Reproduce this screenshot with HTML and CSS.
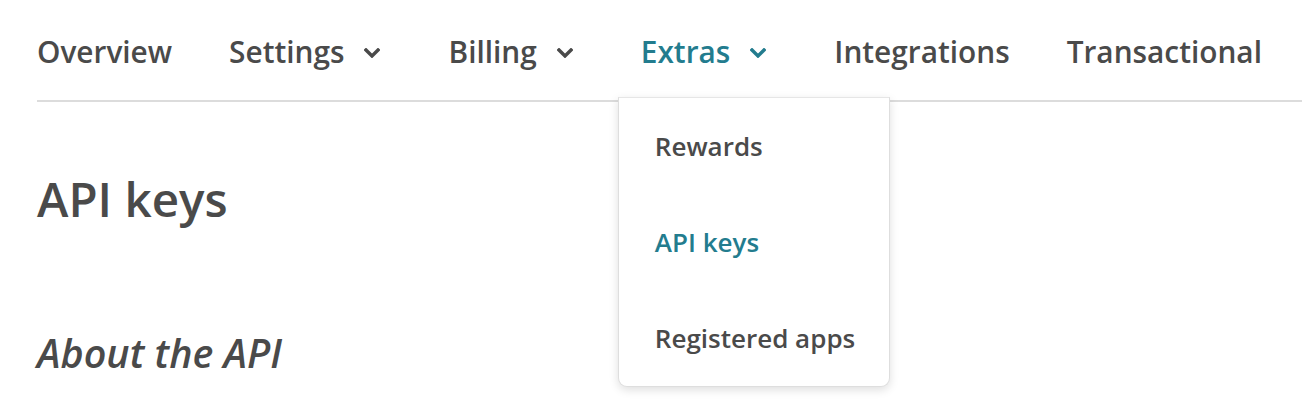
FILE: index.html
```html
<!DOCTYPE html>
<html>
<head>
<meta charset="utf-8">
<link rel="stylesheet" href="styles.css">
</head>
<body>
<nav class="nav">
  <div class="nav-item">Overview</div>
  <div class="nav-item">Settings<svg class="chev" viewBox="0 0 16 10"><polyline points="2,2 8,8 14,2"/></svg></div>
  <div class="nav-item">Billing<svg class="chev" viewBox="0 0 16 10"><polyline points="2,2 8,8 14,2"/></svg></div>
  <div class="nav-item active">Extras<svg class="chev" viewBox="0 0 16 10"><polyline points="2,2 8,8 14,2"/></svg>
    <div class="menu">
      <div class="menu-item">Rewards</div>
      <div class="menu-item current">API keys</div>
      <div class="menu-item">Registered apps</div>
    </div>
  </div>
  <div class="nav-item">Integrations</div>
  <div class="nav-item">Transactional</div>
</nav>
<main class="content">
  <h1 class="title">API keys</h1>
  <h2 class="subtitle">About the API</h2>
</main>
</body>
</html>
```

FILE: styles.css
```css
html, body {
  margin: 0;
  padding: 0;
  background: #fff;
}
body {
  font-family: "Open Sans", "DejaVu Sans", sans-serif;
  color: #4a4a4a;
  min-height: 418px;
}
.nav {
  display: flex;
  gap: 57px;
  margin-left: 37px;
  padding: 32px 0 28px;
  border-bottom: 2px solid #dcdcdc;
}
.nav-item {
  position: relative;
  font-size: 29.8px;
  font-weight: 600;
  line-height: 40px;
  white-space: nowrap;
  display: flex;
  align-items: center;
}
.nav-item.active {
  color: #237c8e;
}
.chev {
  width: 16px;
  height: 10px;
  margin-left: 20px;
  margin-right: 11px;
  margin-top: 2px;
  fill: none;
  stroke: currentColor;
  stroke-width: 3.4;
  stroke-linecap: square;
}
.menu {
  position: absolute;
  left: -23px;
  top: 65px;
  width: 270px;
  height: 288px;
  background: #fff;
  border: 1px solid #dedede;
  border-top-color: #e6e6e6;
  border-radius: 0 0 9px 9px;
  box-shadow: 0 3px 10px rgba(0, 0, 0, 0.13);
  color: #4a4a4a;
  z-index: 2;
}
.menu-item {
  font-size: 26px;
  font-weight: 600;
  line-height: 96px;
  height: 96px;
  padding-left: 36px;
}
.menu-item.current {
  color: #237c8e;
}
.content {
  padding-left: 37px;
}
.title {
  margin: 67px 0 0;
  font-size: 47.5px;
  font-weight: 600;
  line-height: 60px;
}
.subtitle {
  margin: 99px 0 0;
  font-size: 39.5px;
  font-weight: 600;
  font-style: italic;
  line-height: 50px;
}
```
